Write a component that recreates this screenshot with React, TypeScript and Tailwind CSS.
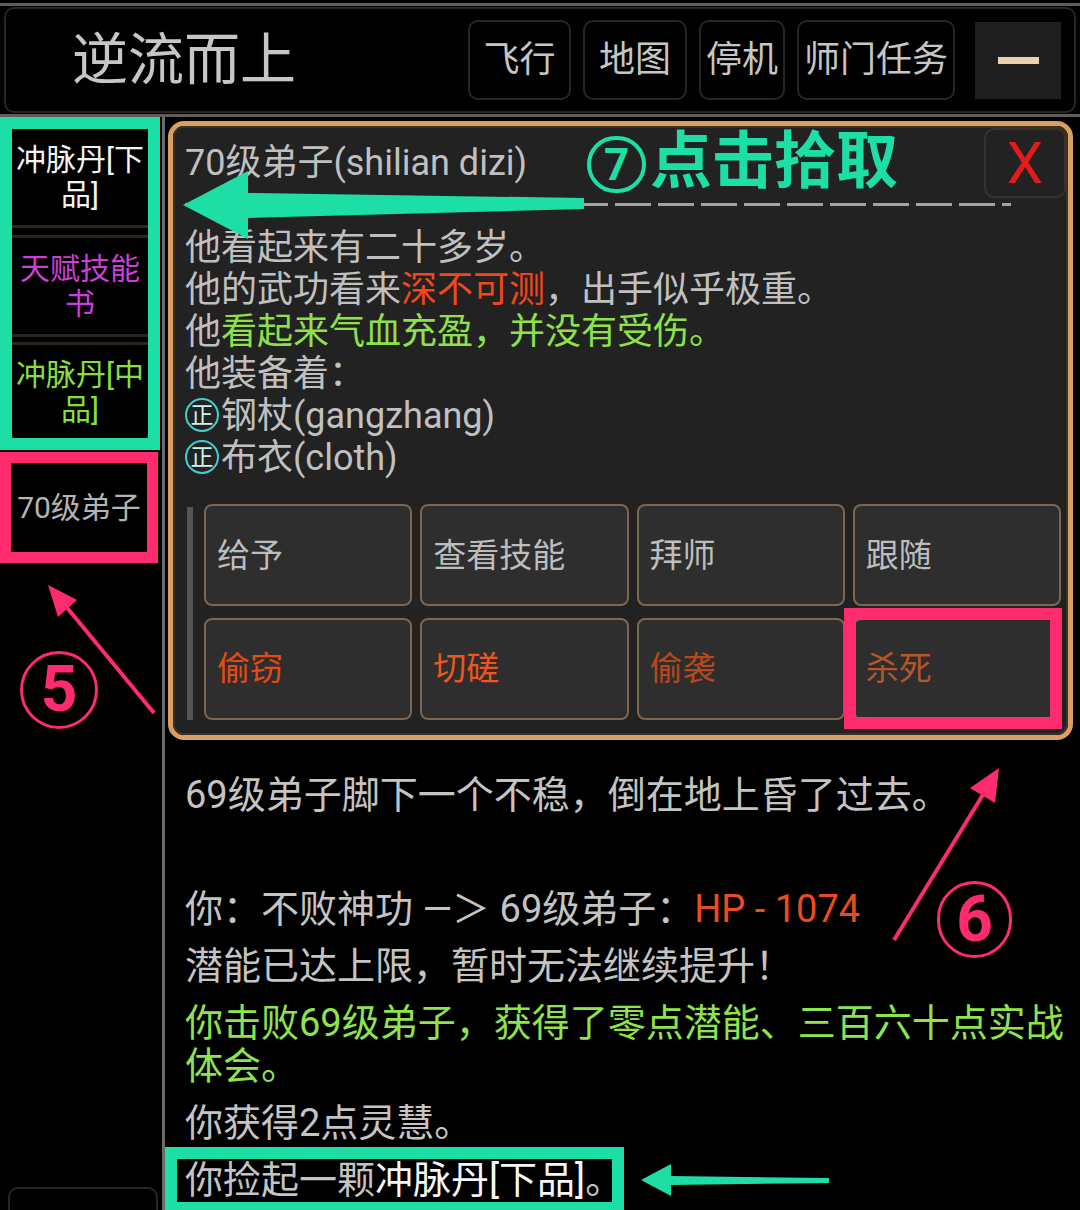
import clsx from "clsx";

const topButtons = [
  { label: "飞行", w: "w-[103px]" },
  { label: "地图", w: "w-[104px]" },
  { label: "停机", w: "w-[86px]" },
  { label: "师门任务", w: "w-[158px]" },
];

const actions = [
  { label: "给予", color: "text-[#bdbdbd]" },
  { label: "查看技能", color: "text-[#bdbdbd]" },
  { label: "拜师", color: "text-[#bdbdbd]" },
  { label: "跟随", color: "text-[#bdbdbd]" },
  { label: "偷窃", color: "text-[#e44a14]" },
  { label: "切磋", color: "text-[#ef561e]" },
  { label: "偷袭", color: "text-[#b6481a]" },
  { label: "杀死", color: "text-[#b4552a]" },
];

function EquipMark() {
  return (
    <span className="mr-[2px] inline-flex h-[34px] w-[34px] translate-y-[-3px] items-center justify-center rounded-full border-2 border-[#3fcfcf] align-middle text-[23px] leading-none text-[#cdf3f3]">
      正
    </span>
  );
}

export default function App() {
  return (
    <div className="relative h-[1210px] w-[1080px] overflow-hidden bg-black font-[Roboto,'Noto_Sans_CJK_SC',sans-serif] text-[#c4c4c4]">
      {/* top bar */}
      <div className="pt-[3px]">
        <div className="border-y-[3px] border-[#615c57] px-[4px] py-[1px]">
          <div className="flex h-[106px] items-center rounded-[10px] border-2 border-[#2b2521] pl-[66px] pr-[13px]">
            <div className="text-[56px] leading-none text-[#c6c6c6]">逆流而上</div>
            <div className="ml-auto flex items-center gap-[12px]">
              {topButtons.map((b) => (
                <div
                  key={b.label}
                  className={clsx(
                    "flex h-[80px] items-center justify-center rounded-[10px] border-2 border-[#2b2521] text-[36px] leading-none text-[#c6c6c6]",
                    b.w
                  )}
                >
                  {b.label}
                </div>
              ))}
              <div className="ml-[8px] flex h-[77px] w-[86px] items-center justify-center bg-[#1f1f1f]">
                <div className="h-[7px] w-[41px] bg-[#ecd0b0]" />
              </div>
            </div>
          </div>
        </div>
      </div>

      <div className="flex h-[1093px]">
        {/* sidebar */}
        <div className="flex w-[162px] flex-col">
          <div className="flex w-[160px] flex-col border-[12px] border-[#1ddfa6] text-center text-[30px] leading-[35px]">
            <div className="flex h-[99px] items-center justify-center border-b-[3px] border-[#2b241f] text-[#f4f4f4]">
              <div>
                冲脉丹[下
                <br />
                品]
              </div>
            </div>
            <div className="mt-[7px] flex h-[102px] items-center justify-center border-y-[3px] border-[#2b241f] text-[#cc3fd8]">
              <div>
                天赋技能
                <br />书
              </div>
            </div>
            <div className="mt-[5px] flex h-[96px] items-center justify-center border-t-[3px] border-[#2b241f] text-[#86e03a]">
              <div>
                冲脉丹[中
                <br />
                品]
              </div>
            </div>
          </div>
          <div className="mt-[2px] flex h-[111px] w-[158px] items-center justify-center border-[11px] border-[#fe2c6e] text-[30px] text-[#b4b4b4]">
            70级弟子
          </div>
          <div className="ml-[8px] mt-auto h-[23px] w-[150px] rounded-t-[10px] border-2 border-b-0 border-[#2b2521]" />
        </div>

        <div className="w-[3px] bg-[#6a6a6a]" />

        {/* main */}
        <div className="flex flex-1 flex-col">
          <div className="ml-[3px] mr-[7px] mt-[4px] rounded-[16px] border-[5px] border-[#d9a062]">
            <div className="rounded-[11px] border-2 border-[#3b3128] bg-[#222222] pb-[13px]">
              <div className="flex h-[70px] items-center pl-[10px]">
                <div className="text-[36px] leading-none text-[#c0c0c0]">70级弟子(shilian dizi)</div>
                <div className="ml-auto flex h-[70px] w-[82px] items-center justify-center rounded-[10px] border-2 border-[#3b3128] text-[58px] leading-none text-[#e31b1b]">
                  X
                </div>
              </div>
              <div className="ml-[10px] mt-[5px] h-[3px] w-[826px] bg-[repeating-linear-gradient(90deg,#a3a3a3_0_36px,transparent_36px_43px)]" />

              <div className="mt-[21px] pl-[10px] text-[36px] leading-[42px] text-[#c0c0c0]">
                <div>他看起来有二十多岁。</div>
                <div>
                  他的武功看来<span className="text-[#f2461c]">深不可测</span>，出手似乎极重。
                </div>
                <div>
                  他<span className="text-[#8ee14b]">看起来气血充盈，并没有受伤。</span>
                </div>
                <div>他装备着：</div>
                <div>
                  <EquipMark />
                  钢杖(gangzhang)
                </div>
                <div>
                  <EquipMark />
                  布衣(cloth)
                </div>
              </div>

              <div className="mt-[25px] flex pl-[12px]">
                <div className="mt-[3px] h-[213px] w-[6px] bg-[#555555]" />
                <div className="ml-[11px] grid w-[857px] grid-cols-4 gap-x-[8px] gap-y-[11px]">
                  {actions.map((a) => (
                    <div key={a.label} className="relative">
                      <div
                        className={clsx(
                          "flex h-[102px] items-center rounded-[8px] border-2 border-[#7d6650] bg-[#2e2e2e] pl-[11px] text-[33px] leading-none",
                          a.color
                        )}
                      >
                        {a.label}
                      </div>
                      {a.label === "杀死" && (
                        <div className="absolute -bottom-[9px] -left-[9px] -right-[1px] -top-[10px] border-[12px] border-[#fe2c6e]" />
                      )}
                    </div>
                  ))}
                </div>
              </div>
            </div>
          </div>

          {/* log */}
          <div className="pl-[20px] pt-[34px] text-[38px] leading-[43px] text-[#c4c4c4]">
            <p className="mb-[14px]">69级弟子脚下一个不稳，倒在地上昏了过去。</p>
            <p className="mb-[14px] h-[43px]" />
            <p className="mb-[14px]">
              你：不败神功 —＞ 69级弟子：<span className="text-[#ea4d1c]">HP - 1074</span>
            </p>
            <p className="mb-[14px]">潜能已达上限，暂时无法继续提升！</p>
            <p className="mb-[14px] text-[#8de44c]">
              你击败69级弟子，获得了零点潜能、三百六十点实战
              <br />
              体会。
            </p>
            <p className="mb-[14px]">你获得2点灵慧。</p>
            <p className="-ml-[20px] -mt-[12px] w-[459px] whitespace-nowrap border-[12px] border-[#1ddfa6] pl-[8px]">
              你捡起一颗<span className="text-[#f6f6f6]">冲脉丹[下品]</span>。
            </p>
          </div>
        </div>
      </div>

      {/* annotations */}
      <svg className="pointer-events-none absolute left-0 top-0" width={1080} height={1210}>
        <polygon fill="#1ddfa6" points="183,205 248,171 248,193 584,198 584,209 248,218 248,239" />
        <polygon fill="#1ddfa6" points="641,1180 671,1164 671,1176 829,1178 829,1183 671,1185 671,1196" />
        <line x1="154" y1="713" x2="64" y2="604" stroke="#fe2c6e" strokeWidth="4" />
        <polygon fill="#fe2c6e" points="48,585 77,600 58,617" />
        <line x1="894" y1="940" x2="984" y2="793" stroke="#fe2c6e" strokeWidth="4" />
        <polygon fill="#fe2c6e" points="999,768 995,803 970,788" />
      </svg>

      <div className="absolute left-[587px] top-[136px] flex h-[57px] w-[59px] items-center justify-center rounded-full border-[4px] border-[#1ddfa6] text-[44px] font-bold leading-none text-[#1ddfa6]">
        7
      </div>
      <div className="absolute left-[650px] top-[131px] text-[62px] font-bold leading-none text-[#1ddfa6]">
        点击拾取
      </div>
      <div className="absolute left-[20px] top-[651px] flex h-[78px] w-[78px] items-center justify-center rounded-full border-[3px] border-[#fe2c6e] text-[64px] font-bold leading-none text-[#fe2c6e]">
        5
      </div>
      <div className="absolute left-[937px] top-[881px] flex h-[77px] w-[75px] items-center justify-center rounded-full border-[3px] border-[#fe2c6e] text-[64px] font-bold leading-none text-[#fe2c6e]">
        6
      </div>
    </div>
  );
}
